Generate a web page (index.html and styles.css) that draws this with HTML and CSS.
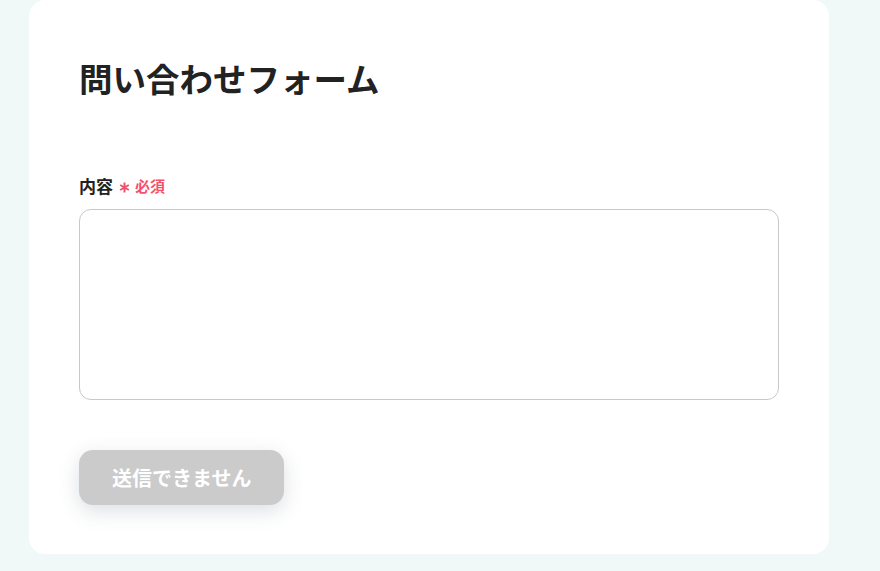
FILE: index.html
```html
<!DOCTYPE html>
<html lang="ja">

<head>
    <meta charset="UTF-8">
    <meta name="viewport" content="width=device-width, initial-scale=1.0">
    <title>問い合わせフォーム</title>
    <link rel="stylesheet" href="styles.css">
</head>

<body>
    <div class="card">
        <h1 class="title">問い合わせフォーム</h1>
        <form class="contact-form">
            <label for="content" class="field-label">内容
                <span class="required">
                    <svg class="mark" width="11" height="11" viewBox="0 0 11 11">
                        <path d="M5.5 0.5V10.5M1.2 3L9.8 8M1.2 8L9.8 3" stroke="#f4516c" stroke-width="2" />
                    </svg>必須
                </span>
            </label>
            <textarea id="content" name="content"></textarea>
            <button type="button" class="submit" disabled>送信できません</button>
        </form>
    </div>
</body>

</html>
```

FILE: styles.css
```css
body {
    font-family: "Noto Sans CJK JP", "Noto Sans", sans-serif;
    background-color: #f0f9f8;
    margin: 0;
    padding: 0;
    color: #222;
}

.card {
    width: 800px;
    margin-left: 29px;
    box-sizing: border-box;
    padding: 54px 50px 49px;
    background-color: #fff;
    border-radius: 16px;
}

.title {
    margin: 0 0 72px;
    font-size: 33.5px;
    line-height: 48px;
    font-weight: bold;
    color: #222;
}

.contact-form {
    display: flex;
    flex-direction: column;
    align-items: flex-start;
}

.field-label {
    display: flex;
    align-items: center;
    font-size: 17px;
    line-height: 24px;
    font-weight: bold;
    margin-bottom: 11px;
}

.required {
    display: flex;
    align-items: center;
    color: #f4516c;
    font-size: 15px;
    margin-left: 6px;
}

.required .mark {
    margin-right: 5px;
    margin-top: 3px;
}

textarea {
    width: 700px;
    height: 191px;
    box-sizing: border-box;
    border: 1px solid #c8c8c8;
    border-radius: 12px;
    padding: 12px;
    font-family: inherit;
    font-size: 16px;
    resize: none;
    margin: 0 0 50px;
}

.submit {
    height: 55px;
    padding: 0 33px;
    border: none;
    border-radius: 14px;
    background-color: #cbcbcb;
    color: #fff;
    font-family: inherit;
    font-size: 20px;
    font-weight: bold;
    box-shadow: 0 6px 20px rgba(60, 80, 100, 0.18);
}
```
